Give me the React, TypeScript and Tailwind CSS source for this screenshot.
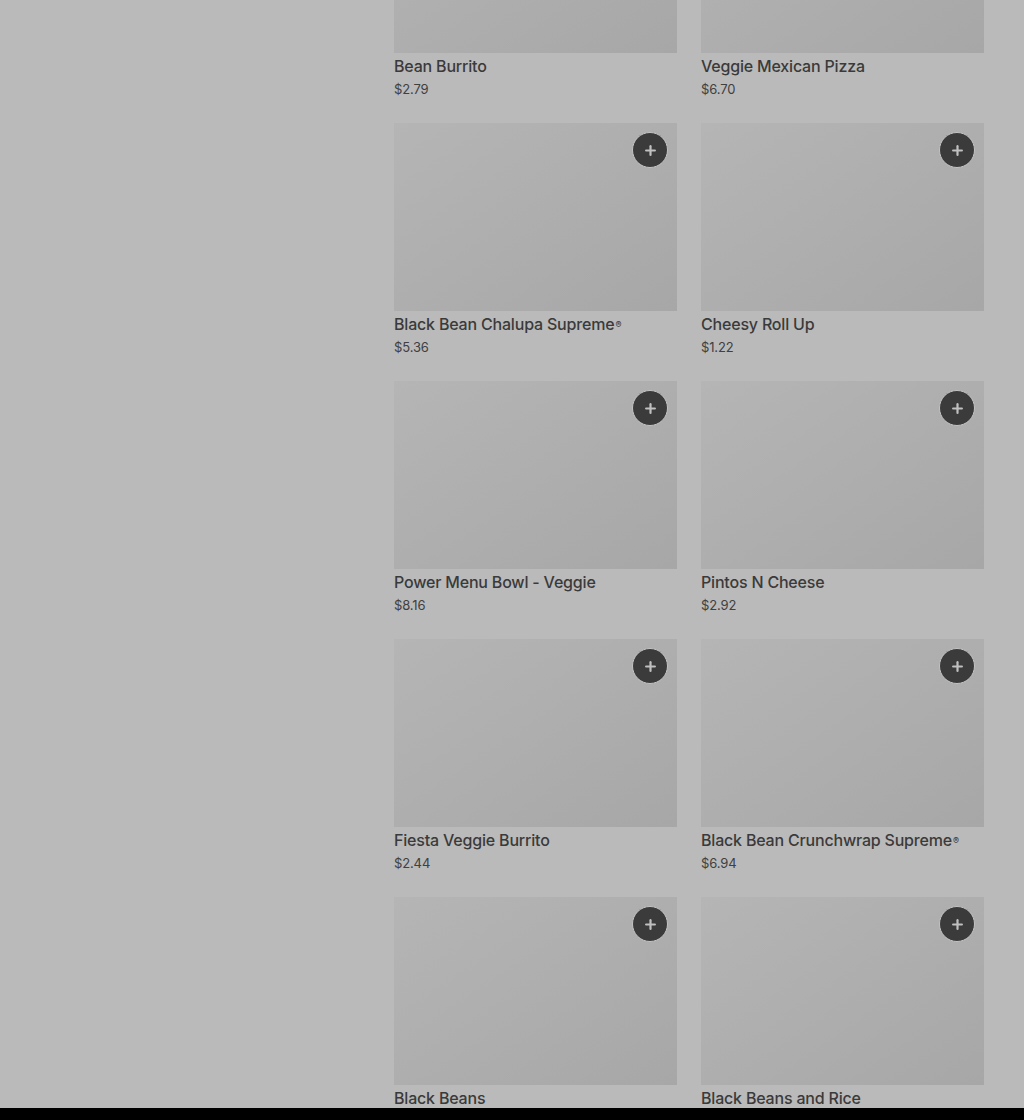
import { Plus } from "lucide-react";

type Item = { name: string; price: string; reg?: boolean };

const items: Item[] = [
  { name: "Bean Burrito", price: "$2.79" },
  { name: "Veggie Mexican Pizza", price: "$6.70" },
  { name: "Black Bean Chalupa Supreme", price: "$5.36", reg: true },
  { name: "Cheesy Roll Up", price: "$1.22" },
  { name: "Power Menu Bowl - Veggie", price: "$8.16" },
  { name: "Pintos N Cheese", price: "$2.92" },
  { name: "Fiesta Veggie Burrito", price: "$2.44" },
  { name: "Black Bean Crunchwrap Supreme", price: "$6.94", reg: true },
  { name: "Black Beans", price: "$1.74" },
  { name: "Black Beans and Rice", price: "$2.09" },
];

function MenuCard({ item }: { item: Item }) {
  return (
    <div className="flex flex-col">
      <div className="relative h-[188px] bg-gradient-to-br from-[#b5b5b5] to-[#a7a7a7]">
        <button className="absolute top-[9px] right-[9px] w-9 h-9 rounded-full bg-[#3b3b3b] border border-[#c4c4c4] flex items-center justify-center text-[#c0c0c0]">
          <Plus size={15} strokeWidth={3.5} />
        </button>
      </div>
      <div className="mt-[3px] text-[16px] leading-[20px] font-medium tracking-[-0.012em] text-[#3a3a3a]">
        {item.name}
        {item.reg && <sup className="text-[9px] ml-[1px] relative -top-[2px]">®</sup>}
      </div>
      <div className="mt-[4px] text-[13px] leading-[18px] tracking-[-0.01em] text-[#404040]">{item.price}</div>
    </div>
  );
}

export default function App() {
  return (
    <div
      className="relative h-[1120px] w-full bg-[#bababa] overflow-hidden"
      style={{ fontFamily: "Inter, 'Noto Sans', sans-serif" }}
    >
      <div className="pl-[394px] pr-[40px]">
        <div className="mt-[-135px] grid grid-cols-2 gap-x-6 gap-y-[25px]">
          {items.map(it => (
            <MenuCard key={it.name} item={it} />
          ))}
        </div>
      </div>
      {/* bottom bar sits over the list */}
      <div className="absolute left-0 right-0 bottom-0 h-[12px] bg-black" />
    </div>
  );
}
